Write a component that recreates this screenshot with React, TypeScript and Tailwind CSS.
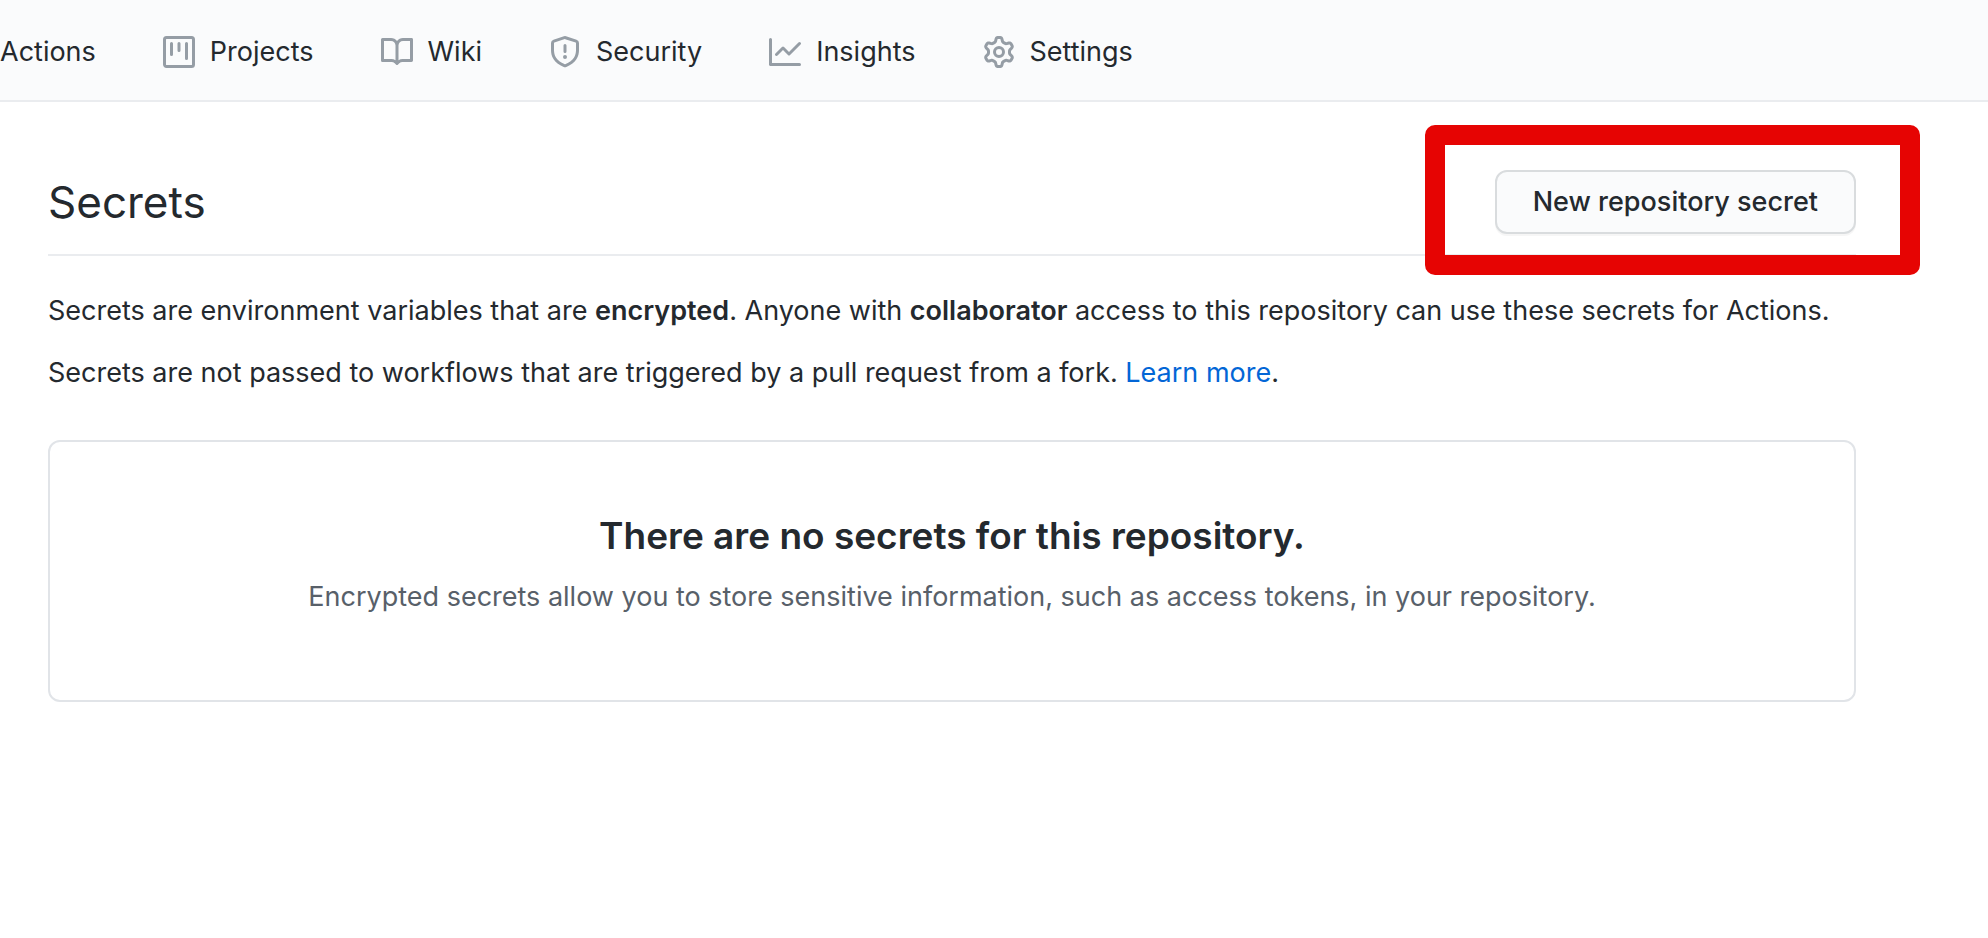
type Tab = { label: string; path?: string };

const tabs: Tab[] = [
  { label: "Actions" },
  {
    label: "Projects",
    path: "M1.75 0A1.75 1.75 0 000 1.75v12.5C0 15.216.784 16 1.75 16h12.5A1.75 1.75 0 0016 14.25V1.75A1.75 1.75 0 0014.25 0H1.75zM1.5 1.75a.25.25 0 01.25-.25h12.5a.25.25 0 01.25.25v12.5a.25.25 0 01-.25.25H1.75a.25.25 0 01-.25-.25V1.75zM11.75 3a.75.75 0 00-.75.75v7.5a.75.75 0 001.5 0v-7.5a.75.75 0 00-.75-.75zm-8.25.75a.75.75 0 011.5 0v5.5a.75.75 0 01-1.5 0v-5.5zM8 3a.75.75 0 00-.75.75v3.5a.75.75 0 001.5 0v-3.5A.75.75 0 008 3z",
  },
  {
    label: "Wiki",
    path: "M0 1.75A.75.75 0 01.75 1h4.253c1.227 0 2.317.59 3 1.501A3.744 3.744 0 0111.006 1h4.245a.75.75 0 01.75.75v10.5a.75.75 0 01-.75.75h-4.507a2.25 2.25 0 00-1.591.659l-.622.621a.75.75 0 01-1.06 0l-.622-.621A2.25 2.25 0 005.258 13H.75a.75.75 0 01-.75-.75V1.75zm8.755 3a2.25 2.25 0 012.25-2.25H14.5v9h-3.757c-.71 0-1.4.201-1.992.572l.004-7.322zm-1.504 7.324l.004-5.073-.002-2.253A2.25 2.25 0 005.003 2.5H1.5v9h3.757a3.75 3.75 0 011.994.574z",
  },
  {
    label: "Security",
    path: "M7.467.133a1.75 1.75 0 011.066 0l5.25 1.68A1.75 1.75 0 0115 3.48V7c0 1.566-.32 3.182-1.303 4.682-.983 1.498-2.585 2.813-5.032 3.855a1.7 1.7 0 01-1.33 0c-2.447-1.042-4.049-2.357-5.032-3.855C1.32 10.182 1 8.566 1 7V3.48a1.75 1.75 0 011.217-1.667l5.25-1.68zm.61 1.429a.25.25 0 00-.153 0l-5.25 1.68a.25.25 0 00-.174.238V7c0 1.358.275 2.666 1.057 3.86.784 1.194 2.121 2.34 4.366 3.297a.2.2 0 00.154 0c2.245-.956 3.582-2.104 4.366-3.298C13.225 9.666 13.5 8.36 13.5 7V3.48a.25.25 0 00-.174-.237l-5.25-1.68zM9 10.5a1 1 0 11-2 0 1 1 0 012 0zm-.25-5.75a.75.75 0 10-1.5 0v3a.75.75 0 001.5 0v-3z",
  },
  {
    label: "Insights",
    path: "M1.5 1.75a.75.75 0 00-1.5 0v12.5c0 .414.336.75.75.75h14.5a.75.75 0 000-1.5H1.5V1.75zm14.28 2.53a.75.75 0 00-1.06-1.06L10 7.94 7.53 5.47a.75.75 0 00-1.06 0L3.22 8.72a.75.75 0 001.06 1.06L7 7.06l2.47 2.47a.75.75 0 001.06 0l5.25-5.25z",
  },
  {
    label: "Settings",
    path: "M7.429 1.525a6.593 6.593 0 011.142 0c.036.003.108.036.137.146l.289 1.105c.147.56.55.967.997 1.189.174.086.341.183.501.29.417.278.97.423 1.53.27l1.102-.303c.11-.03.175.016.195.046.219.31.41.641.573.989.014.031.022.11-.059.19l-.815.806c-.411.406-.562.957-.53 1.456a4.588 4.588 0 010 .582c-.032.499.119 1.05.53 1.456l.815.806c.08.08.073.159.059.19a6.494 6.494 0 01-.573.99c-.02.029-.086.074-.195.045l-1.103-.303c-.559-.153-1.112-.008-1.529.27-.16.107-.327.204-.5.29-.449.222-.851.628-.998 1.189l-.289 1.105c-.029.11-.101.143-.137.146a6.613 6.613 0 01-1.142 0c-.036-.003-.108-.037-.137-.146l-.289-1.105c-.147-.56-.55-.967-.997-1.189a4.502 4.502 0 01-.501-.29c-.417-.278-.97-.423-1.53-.27l-1.102.303c-.11.03-.175-.016-.195-.046a6.492 6.492 0 01-.573-.989c-.014-.031-.022-.11.059-.19l.815-.806c.411-.406.562-.957.53-1.456a4.587 4.587 0 010-.582c.032-.499-.119-1.05-.53-1.456l-.815-.806c-.08-.08-.073-.159-.059-.19a6.44 6.44 0 01.573-.99c.02-.029.086-.075.195-.045l1.103.303c.559.153 1.112.008 1.529-.27.16-.107.327-.204.5-.29.449-.222.851-.628.998-1.189l.289-1.105c.029-.11.101-.143.137-.146zM8 0c-.236 0-.47.01-.701.03-.743.065-1.29.615-1.458 1.261l-.29 1.106c-.017.066-.078.158-.211.224a5.994 5.994 0 00-.668.386c-.123.082-.233.09-.3.071L3.27 2.776c-.644-.177-1.392.02-1.82.63a7.977 7.977 0 00-.704 1.217c-.315.675-.111 1.422.363 1.891l.815.806c.05.048.098.147.088.294a6.084 6.084 0 000 .772c.01.147-.038.246-.088.294l-.815.806c-.474.469-.678 1.216-.363 1.891.2.428.436.835.704 1.218.428.609 1.176.806 1.82.63l1.103-.303c.066-.019.176-.011.299.071.213.143.436.272.668.386.133.066.194.158.212.224l.289 1.106c.169.646.715 1.196 1.458 1.26a8.094 8.094 0 001.402 0c.743-.064 1.29-.614 1.458-1.26l.29-1.106c.017-.066.078-.158.211-.224a5.98 5.98 0 00.668-.386c.123-.082.233-.09.3-.071l1.102.302c.644.177 1.392-.02 1.82-.63.268-.382.505-.789.704-1.217.315-.675.111-1.422-.364-1.891l-.814-.806c-.05-.048-.098-.147-.088-.294a6.1 6.1 0 000-.772c-.01-.147.039-.246.088-.294l.814-.806c.475-.469.679-1.216.364-1.891a7.992 7.992 0 00-.704-1.218c-.428-.609-1.176-.806-1.82-.63l-1.103.303c-.066.019-.176.011-.299-.071a5.991 5.991 0 00-.668-.386c-.133-.066-.194-.158-.212-.224L10.16 1.29C9.99.645 9.444.095 8.701.031A8.094 8.094 0 008 0zm1.5 8a1.5 1.5 0 11-3 0 1.5 1.5 0 013 0zM11 8a3 3 0 11-6 0 3 3 0 016 0z",
  },
];

function RepoNav() {
  return (
    <nav className="border-b-2 border-[#eaecef] bg-[#fafbfc] pt-[31px] pb-[27px]">
      <ul className="flex gap-[67px]">
        {tabs.map((tab) => (
          <li key={tab.label}>
            <a href="#" className="flex items-center gap-[15px] leading-[42px]">
              {tab.path && (
                <svg viewBox="0 0 16 16" className="size-8 shrink-0 fill-[#959da5]" aria-hidden="true">
                  <path fillRule="evenodd" d={tab.path} />
                </svg>
              )}
              <span>{tab.label}</span>
            </a>
          </li>
        ))}
      </ul>
    </nav>
  );
}

export default function App() {
  return (
    <div className="min-h-screen bg-white font-['Inter',sans-serif] text-[27px] leading-[42px] text-[#24292e]">
      <RepoNav />
      <main className="pt-[68px] pr-[132px] pl-12">
        <header className="flex items-center justify-between border-b-2 border-[#eaecef] pb-5">
          <h1 className="text-[44px] leading-[64px]">Secrets</h1>
          <div className="relative">
            <button
              type="button"
              className="h-16 rounded-xl border-2 border-[#d9dcde] bg-[#fafbfc] px-9 font-medium shadow-[0_2px_0_rgba(27,31,35,0.04)]"
            >
              New repository secret
            </button>
            <div className="pointer-events-none absolute -top-[45px] -right-16 -bottom-[41px] -left-[70px] rounded-[10px] border-20 border-[#e60403]" />
          </div>
        </header>
        <p className="mt-[34px]">
          Secrets are environment variables that are <strong className="font-semibold">encrypted</strong>. Anyone with{" "}
          <strong className="font-semibold">collaborator</strong> access to this repository can use these secrets for Actions.
        </p>
        <p className="mt-5">
          Secrets are not passed to workflows that are triggered by a pull request from a fork.{" "}
          <a href="#" className="text-[#0366d6]">
            Learn more
          </a>
          .
        </p>
        <section className="mt-[46px] rounded-xl border-2 border-[#e1e4e8] px-16 pt-16 pb-[82px] text-center">
          <h2 className="text-[37px] leading-[60px] font-semibold">There are no secrets for this repository.</h2>
          <p className="mt-[10px] text-[#586069]">
            Encrypted secrets allow you to store sensitive information, such as access tokens, in your repository.
          </p>
        </section>
      </main>
    </div>
  );
}
